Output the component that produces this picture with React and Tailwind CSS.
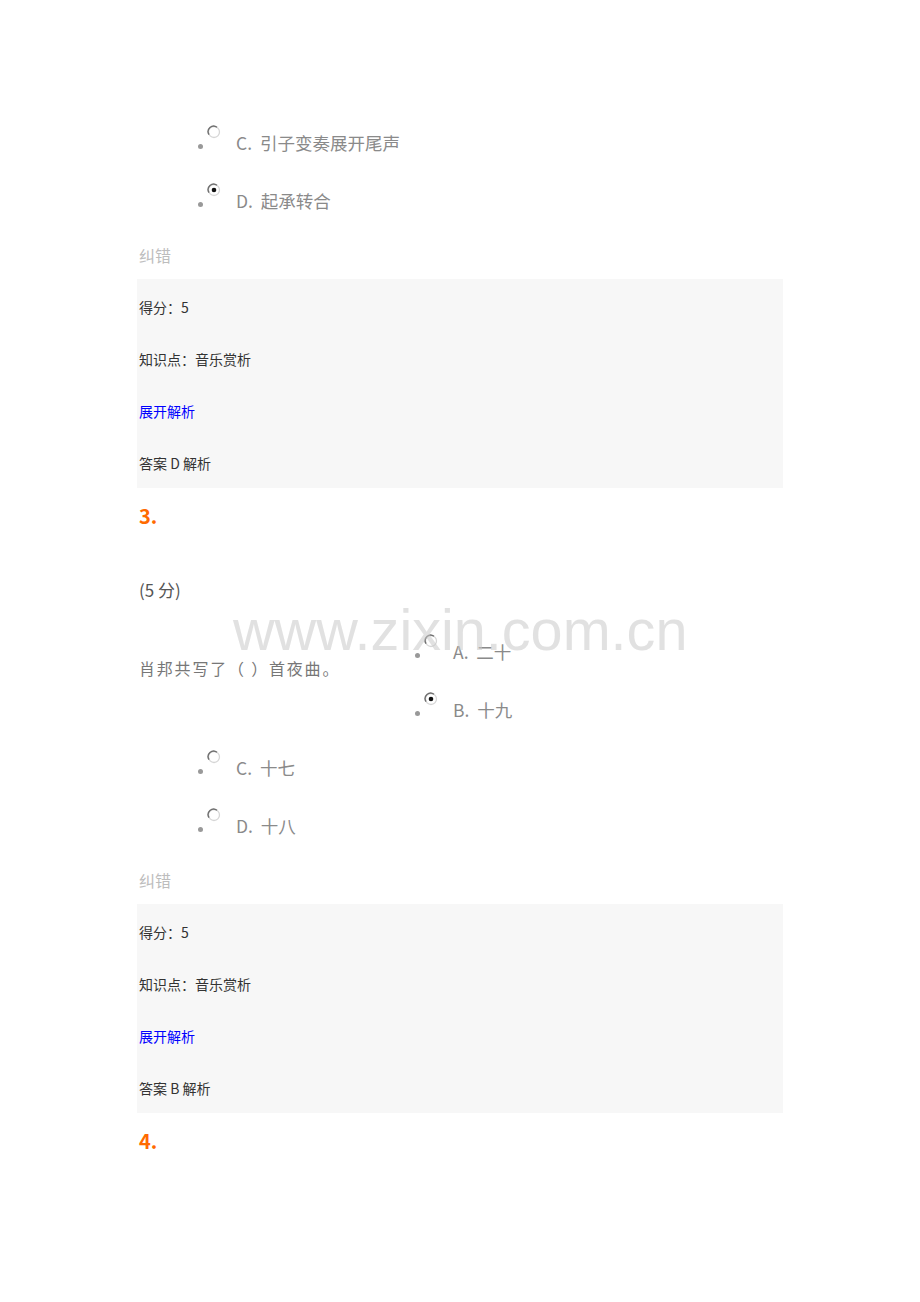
import React from "react";

const cjk = { fontFamily: '"Noto Sans CJK SC", "Noto Sans", sans-serif' };

function Radio({ checked }) {
    return (
        <svg width="14" height="14" viewBox="0 0 14 14" className="shrink-0">
            <circle cx="7" cy="7" r="5.5" fill="#fff" stroke="#d6d6d6" strokeWidth="1.3" />
            <path d="M2.0 9.6 A5.5 5.5 0 0 1 10.0 2.3" fill="none" stroke="#6e6e6e" strokeWidth="1.4" />
            {checked && <circle cx="7" cy="7" r="2.3" fill="#111" />}
        </svg>
    );
}

function Option({ letter, text, checked, indent = "pl-[198px]" }) {
    return (
        <div className={`h-[58px] flex items-center ${indent}`}>
            <span className="w-[5px] h-[5px] rounded-full bg-[#999] mt-[6px]" />
            <span className="ml-[4px] -mt-[22px] flex">
                <Radio checked={checked} />
            </span>
            <span className="ml-[15px] text-[17.5px] leading-6 text-[#8a8a8a]">
                {letter}.&nbsp; {text}
            </span>
        </div>
    );
}

function ScoreBox({ answer }) {
    return (
        <>
            <div className="ml-[139px] mt-[13px] h-6 flex items-center text-[16px] text-[#bdbdbd]">纠错</div>
            <div className="ml-[137px] mt-[12px] w-[646px] h-[209px] bg-[#f7f7f7] pl-[2px] pt-[2px] text-[14px] text-[#333]">
                <div className="h-[52px] flex items-center">得分：5</div>
                <div className="h-[52px] flex items-center">知识点：音乐赏析</div>
                <div className="h-[52px] flex items-center text-[#0000ff]">展开解析</div>
                <div className="h-[52px] flex items-center">答案 {answer} 解析</div>
            </div>
        </>
    );
}

function QNum({ n }) {
    return (
        <div className="ml-[139px] h-[56px] flex items-center text-[20px] font-bold text-[#ff6a00]">{n}.</div>
    );
}

export default function App() {
    return (
        <div className="relative w-[920px] h-[1302px] bg-white" style={cjk}>
            <div className="pt-[114px]">
                <Option letter="C" text="引子变奏展开尾声" />
                <Option letter="D" text="起承转合" checked />
                <ScoreBox answer="D" />

                <QNum n={3} />
                <div className="ml-[139px] mt-[34px] h-6 flex items-center text-[17px] text-[#555]">(5 分)</div>

                <div className="mt-[21px] flex">
                    <div className="w-[415px] pl-[139px] pt-[33px] shrink-0">
                        <div className="text-[16px] leading-6 tracking-[1.8px] text-[#777] whitespace-nowrap">肖邦共写了（ ）首夜曲。</div>
                    </div>
                    <div>
                        <Option letter="A" text="二十" indent="pl-0" />
                        <Option letter="B" text="十九" checked indent="pl-0" />
                    </div>
                </div>
                <Option letter="C" text="十七" />
                <Option letter="D" text="十八" />
                <ScoreBox answer="B" />

                <QNum n={4} />
            </div>

            {/* watermark */}
            <div
                className="absolute left-[233px] top-[602px] text-[57.6px] leading-none text-[rgba(200,200,200,0.55)] pointer-events-none whitespace-nowrap"
                style={{ fontFamily: '"Liberation Sans", Arial, sans-serif' }}
            >
                www.zixin.com.cn
            </div>
        </div>
    );
}
